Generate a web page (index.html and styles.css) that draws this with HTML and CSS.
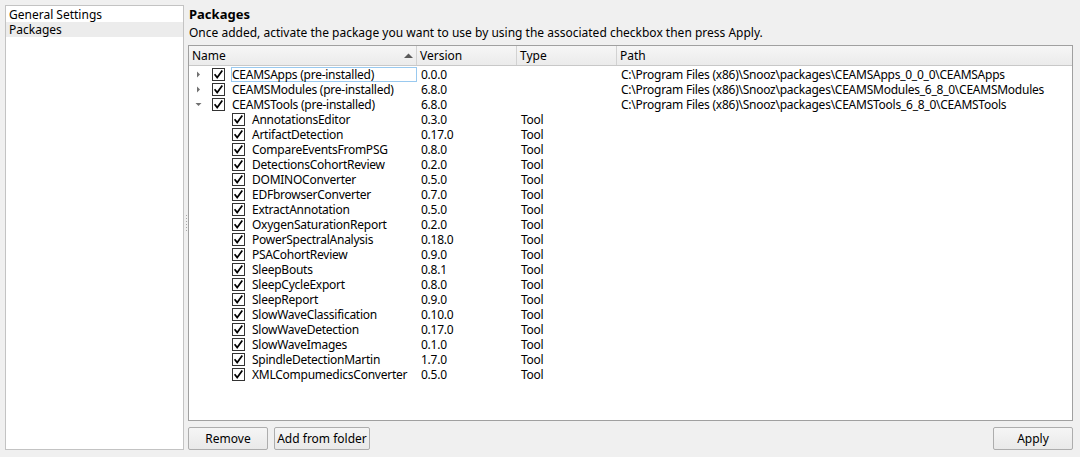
FILE: index.html
```html
<!DOCTYPE html>
<html>
<head>
<meta charset="utf-8">
<link rel="stylesheet" href="styles.css">
</head>
<body>
<div class="app">
  <div class="nav">
    <div class="nav-item">General Settings</div>
    <div class="nav-item selected">Packages</div>
  </div>
  <div class="splitter"><span></span><span></span><span></span><span></span><span></span><span></span></div>
  <div class="main">
    <div class="title">Packages</div>
    <div class="subtitle">Once added, activate the package you want to use by using the associated checkbox then press Apply.</div>
    <div class="tree">
      <div class="header">
        <div class="hcell c-name">Name<svg class="sort" width="9" height="5" viewBox="0 0 9 5"><path d="M0 5 L4.5 0.5 L9 5 Z" fill="#5a5a5a"/></svg></div>
        <div class="hcell c-ver">Version</div>
        <div class="hcell c-type">Type</div>
        <div class="hcell c-path">Path</div>
      </div>
      <div class="rows" id="rows"></div>
    </div>
    <div class="buttons">
      <button class="btn btn-remove">Remove</button>
      <button class="btn btn-add">Add from folder</button>
      <span class="spacer"></span>
      <button class="btn btn-apply">Apply</button>
    </div>
  </div>
</div>
<script src="app.js"></script>
</body>
</html>
```

FILE: app.js
```js
const packages = [
  ["CEAMSApps (pre-installed)", "0.0.0", "", "C:\\Program Files (x86)\\Snooz\\packages\\CEAMSApps_0_0_0\\CEAMSApps", "closed", true],
  ["CEAMSModules (pre-installed)", "6.8.0", "", "C:\\Program Files (x86)\\Snooz\\packages\\CEAMSModules_6_8_0\\CEAMSModules", "closed", false],
  ["CEAMSTools (pre-installed)", "6.8.0", "", "C:\\Program Files (x86)\\Snooz\\packages\\CEAMSTools_6_8_0\\CEAMSTools", "open", false]
];
const tools = [
  ["AnnotationsEditor","0.3.0"],["ArtifactDetection","0.17.0"],["CompareEventsFromPSG","0.8.0"],
  ["DetectionsCohortReview","0.2.0"],["DOMINOConverter","0.5.0"],["EDFbrowserConverter","0.7.0"],
  ["ExtractAnnotation","0.5.0"],["OxygenSaturationReport","0.2.0"],["PowerSpectralAnalysis","0.18.0"],
  ["PSACohortReview","0.9.0"],["SleepBouts","0.8.1"],["SleepCycleExport","0.8.0"],["SleepReport","0.9.0"],
  ["SlowWaveClassification","0.10.0"],["SlowWaveDetection","0.17.0"],["SlowWaveImages","0.1.0"],
  ["SpindleDetectionMartin","1.7.0"],["XMLCompumedicsConverter","0.5.0"]
];
const rowsEl = document.getElementById("rows");
const check = '<span class="cb"><svg width="11" height="11" viewBox="0 0 11 11"><path d="M1.6 5.2 L4.2 8.6 L9.3 1.4" fill="none" stroke="#000" stroke-width="1.7"/></svg></span>';
function arrow(state) {
  if (state === "open") return '<svg class="arr" width="9" height="9" viewBox="0 0 9 9"><path d="M0.5 3 L6.5 3 L3.5 6 Z" fill="#707070"/></svg>';
  return '<svg class="arr" width="9" height="9" viewBox="0 0 9 9"><path d="M2 1.5 L5 4.5 L2 7.5 Z" fill="#707070"/></svg>';
}
let html = "";
packages.forEach(r => {
  html += '<div class="row"><div class="cell c-name lvl0">' + arrow(r[4]) + check +
    '<span class="label' + (r[5] ? ' current' : '') + '">' + r[0] + '</span></div>' +
    '<div class="cell c-ver">' + r[1] + '</div><div class="cell c-type">' + r[2] +
    '</div><div class="cell c-path">' + r[3] + '</div></div>';
});
tools.forEach(t => {
  html += '<div class="row"><div class="cell c-name lvl1">' + check +
    '<span class="label">' + t[0] + '</span></div>' +
    '<div class="cell c-ver">' + t[1] + '</div><div class="cell c-type">Tool</div><div class="cell c-path"></div></div>';
});
rowsEl.innerHTML = html;
```

FILE: styles.css
```css
* { box-sizing: border-box; }
html, body { margin: 0; padding: 0; }
body {
  background: #f0f0f0;
  font-family: "Noto Sans", "Open Sans", sans-serif;
  font-size: 12px;
  color: #000;
  width: 1080px;
  height: 457px;
  overflow: hidden;
}
.app {
  display: flex;
  padding: 5px 7px 0 5px;
  height: 457px;
}
.nav {
  width: 179px;
  height: 445px;
  background: #fff;
  border: 1px solid #c3c3c3;
  padding-top: 1px;
}
.nav-item {
  height: 15px;
  line-height: 15px;
  padding-left: 3px;
  white-space: nowrap;
}
.nav-item.selected { background: #ececec; }
.splitter {
  width: 4px;
  display: flex;
  flex-direction: column;
  justify-content: center;
  align-items: center;
  gap: 2px;
  padding-bottom: 16px;
}
.splitter span {
  width: 1px;
  height: 1px;
  background: #a8a8a8;
}
.main {
  flex: 1;
  display: flex;
  flex-direction: column;
  min-width: 0;
}
.title {
  font-weight: bold;
  font-size: 13px;
  height: 19px;
  line-height: 18px;
  padding-left: 1px;
}
.subtitle {
  height: 21px;
  line-height: 18px;
  padding-left: 1px;
  white-space: nowrap;
}
.tree {
  height: 376px;
  background: #fff;
  border: 1px solid #a0a0a0;
  display: flex;
  flex-direction: column;
}
.header {
  display: flex;
  height: 20px;
  background: linear-gradient(#f6f6f6, #ebebeb);
  border-bottom: 1px solid #c8c8c8;
}
.hcell {
  line-height: 19px;
  padding-left: 3px;
  border-right: 1px solid #d2d2d2;
  position: relative;
  white-space: nowrap;
}
.hcell.c-path { border-right: none; }
.sort {
  position: absolute;
  right: 3px;
  top: 7px;
}
.c-name { width: 228px; flex: none; }
.c-ver { width: 100px; flex: none; }
.c-type { width: 100px; flex: none; }
.c-path { flex: 1; }
.rows { padding-top: 1px; letter-spacing: -0.25px; }
.row {
  display: flex;
  height: 15px;
  line-height: 15px;
}
.cell {
  padding-left: 4px;
  white-space: nowrap;
  overflow: hidden;
}
.cell.c-name {
  display: flex;
  align-items: center;
  padding-left: 0;
}
.lvl0 { padding-left: 6px !important; }
.lvl1 { padding-left: 43px !important; }
.arr { flex: none; margin-right: 8px; }
.cb {
  flex: none;
  width: 13px;
  height: 13px;
  border: 1px solid #333;
  background: #fff;
  display: flex;
  align-items: center;
  justify-content: center;
  margin-right: 6px;
}
.label {
  height: 15px;
  padding-left: 1px;
  padding-right: 2px;
  flex: 1;
}
.label.current {
  box-shadow: inset 0 0 0 1px #99c9ef;
}
.buttons {
  display: flex;
  margin-top: 6px;
  gap: 6px;
  padding-left: 0;
}
.spacer { flex: 1; }
.btn {
  font-family: inherit;
  font-size: 12px;
  height: 23px;
  background: linear-gradient(#f5f5f5, #e9e9e9);
  border: 1px solid #adadad;
  border-radius: 2px;
  padding: 0;
  color: #000;
}
.btn-remove { width: 80px; }
.btn-add { width: 96px; }
.btn-apply { width: 80px; }
```
